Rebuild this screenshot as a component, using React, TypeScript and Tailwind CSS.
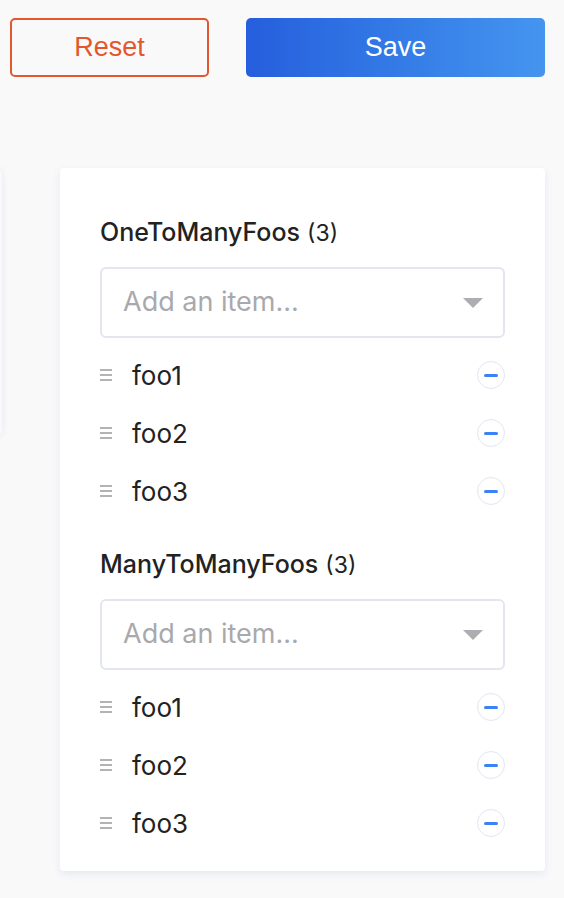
import React from "react";

type Section = { title: string; items: string[] };

const sections: Section[] = [
  { title: "OneToManyFoos", items: ["foo1", "foo2", "foo3"] },
  { title: "ManyToManyFoos", items: ["foo1", "foo2", "foo3"] },
];

function DragHandle() {
  return (
    <div className="flex w-[12px] flex-col gap-[3px]">
      <span className="h-[2px] w-full bg-[#b3b3b6]" />
      <span className="h-[2px] w-full bg-[#b3b3b6]" />
      <span className="h-[2px] w-full bg-[#b3b3b6]" />
    </div>
  );
}

function RemoveButton() {
  return (
    <button className="flex h-[28px] w-[28px] items-center justify-center rounded-full border-[1.5px] border-[#e2e6f1] bg-white">
      <span className="h-[3px] w-[14px] rounded-full bg-[#3b82f6]" />
    </button>
  );
}

function ListSection({ section }: { section: Section }) {
  return (
    <div className="flex flex-col">
      <p className="text-[25px] leading-[28px] text-[#222]">
        <span className="font-medium">{section.title}</span>{" "}
        <span className="text-[23px]">({section.items.length})</span>
      </p>

      <div className="mt-[20px] flex h-[71px] items-center justify-between rounded-[6px] border-2 border-[#e3e6f0] bg-white pl-[21px] pr-[20px]">
        <span className="text-[27px] text-[#a9a9ad]">Add an item...</span>
        <span className="h-0 w-0 border-x-[10px] border-t-[10px] border-x-transparent border-t-[#aeaeb2]" />
      </div>

      <div className="mt-[8px] flex flex-col">
        {section.items.map((item) => (
          <div key={item} className="flex h-[58px] items-center">
            <DragHandle />
            <span className="ml-[20px] flex-1 text-[26px] text-[#222]">
              {item}
            </span>
            <RemoveButton />
          </div>
        ))}
      </div>
    </div>
  );
}

export default function App() {
  return (
    <div
      className="relative min-h-[898px] w-full overflow-hidden bg-[#f9f9fa]"
      style={{ fontFamily: "Inter, 'Liberation Sans', sans-serif" }}
    >
      {/* neighbouring panel, mostly off screen */}
      <div className="absolute left-[-300px] top-[170px] h-[265px] w-[302px] rounded-[4px] bg-[#f9f9fa] shadow-[0_0_6px_rgba(90,110,200,0.12)]" />

      <div className="flex gap-[37px] pl-[10px] pr-[19px] pt-[18px]">
        <button
          className="h-[59px] w-[199px] rounded-[5px] border-2 border-[#e4572e] text-[27px] text-[#e4572e]"
          style={{ fontFamily: "'Liberation Sans', Arial, sans-serif" }}
        >
          Reset
        </button>
        <button
          className="h-[59px] flex-1 rounded-[5px] bg-gradient-to-r from-[#265edd] to-[#4595ef] text-[27px] text-white"
          style={{ fontFamily: "'Liberation Sans', Arial, sans-serif" }}
        >
          Save
        </button>
      </div>

      <div className="relative ml-[60px] mr-[19px] mt-[91px] flex flex-col gap-[30px] rounded-[4px] bg-white px-[40px] pb-[19px] pt-[50px] shadow-[0_3px_8px_rgba(70,90,170,0.1)]">
        {sections.map((s) => (
          <ListSection key={s.title} section={s} />
        ))}
      </div>
    </div>
  );
}
